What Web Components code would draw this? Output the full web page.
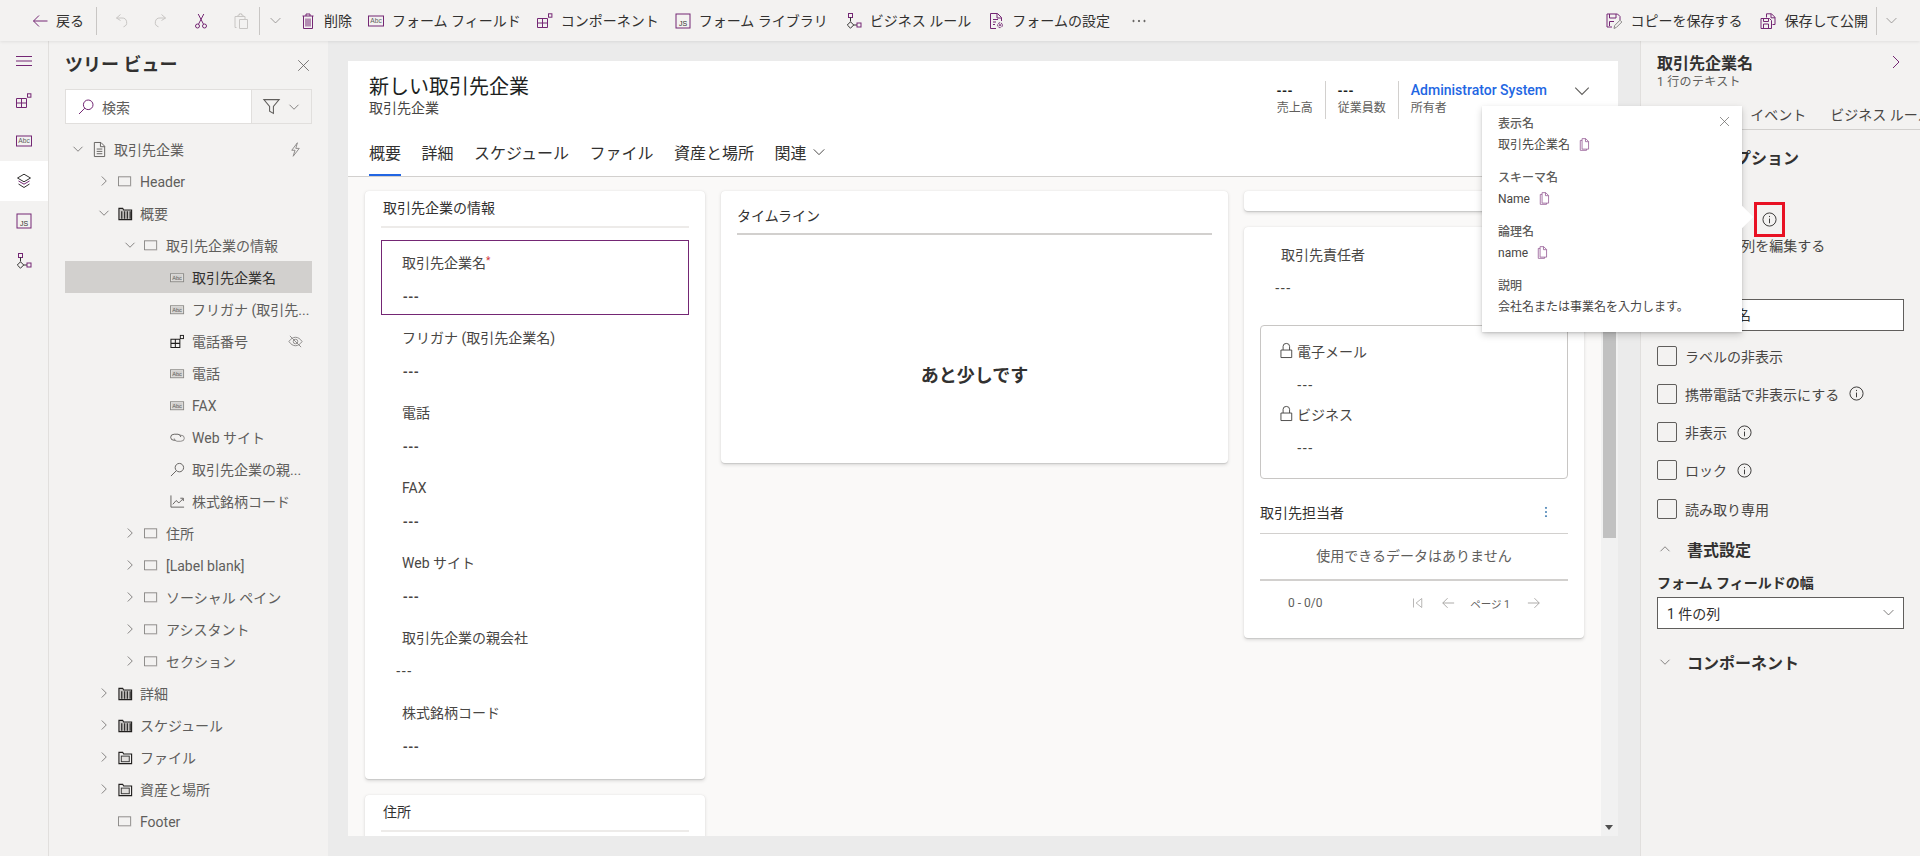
<!DOCTYPE html>
<html lang="ja">
<head>
<meta charset="utf-8">
<title>フォーム デザイナー</title>
<style>
  html, body { margin: 0; height: 100%; overflow: hidden; }
  body { font-family: Roboto, "Noto Sans CJK JP", sans-serif; font-size: 14px; color: #323130; background: #f3f2f1; }
</style>
</head>
<body>
<app-toolbar>
  <tb-btn icon="back" style="margin-left:0">戻る</tb-btn>
  <tb-sep style="margin:0 16px 0 12px"></tb-sep>
  <tb-btn icon="undo" off></tb-btn>
  <tb-btn icon="redo" off style="margin-left:24px"></tb-btn>
  <tb-btn icon="cut" style="margin-left:24px"></tb-btn>
  <tb-btn icon="paste" off style="margin-left:24px"></tb-btn>
  <tb-sep style="margin:0 9px 0 10px"></tb-sep>
  <tb-btn icon="down" off style="margin-left:0;color:#8a8886"></tb-btn>
  <tb-btn icon="trash" style="margin-left:18px">削除</tb-btn>
  <tb-btn icon="abc" style="margin-left:16px">フォーム フィールド</tb-btn>
  <tb-btn icon="comp" style="margin-left:16px">コンポーネント</tb-btn>
  <tb-btn icon="js" style="margin-left:16px">フォーム ライブラリ</tb-btn>
  <tb-btn icon="flow" style="margin-left:18px">ビジネス ルール</tb-btn>
  <tb-btn icon="gear" style="margin-left:17px">フォームの設定</tb-btn>
  <tb-btn icon="more" off style="margin-left:21px;color:#605e5c"></tb-btn>
  <tb-btn slot="right" icon="saveas">コピーを保存する</tb-btn>
  <tb-btn slot="right" icon="publish" style="margin-left:18px">保存して公開</tb-btn>
  <tb-sep slot="right" style="margin:0 8px"></tb-sep>
  <tb-btn slot="right" icon="down" off style="margin:0 22px 0 0;color:#8a8886"></tb-btn>
</app-toolbar>

<app-body>
  <left-rail></left-rail>

  <tree-view heading="ツリー ビュー">
    <tree-row level="0" chevron="open" icon="doc" bolt>取引先企業</tree-row>
    <tree-row level="1" chevron="closed" icon="section">Header</tree-row>
    <tree-row level="1" chevron="open" icon="tab">概要</tree-row>
    <tree-row level="2" chevron="open" icon="section">取引先企業の情報</tree-row>
    <tree-row level="3" icon="abcgray" selected>取引先企業名</tree-row>
    <tree-row level="3" icon="abcgray">フリガナ (取引先...</tree-row>
    <tree-row level="3" icon="compdark" hidden-mark>電話番号</tree-row>
    <tree-row level="3" icon="abcgray">電話</tree-row>
    <tree-row level="3" icon="abcgray">FAX</tree-row>
    <tree-row level="3" icon="link">Web サイト</tree-row>
    <tree-row level="3" icon="lookup">取引先企業の親...</tree-row>
    <tree-row level="3" icon="chart">株式銘柄コード</tree-row>
    <tree-row level="2" chevron="closed" icon="section">住所</tree-row>
    <tree-row level="2" chevron="closed" icon="section">[Label blank]</tree-row>
    <tree-row level="2" chevron="closed" icon="section">ソーシャル ペイン</tree-row>
    <tree-row level="2" chevron="closed" icon="section">アシスタント</tree-row>
    <tree-row level="2" chevron="closed" icon="section">セクション</tree-row>
    <tree-row level="1" chevron="closed" icon="tab">詳細</tree-row>
    <tree-row level="1" chevron="closed" icon="tab">スケジュール</tree-row>
    <tree-row level="1" chevron="closed" icon="tab2">ファイル</tree-row>
    <tree-row level="1" chevron="closed" icon="tab2">資産と場所</tree-row>
    <tree-row level="1" icon="section">Footer</tree-row>
  </tree-view>

  <form-canvas>
    <form-header title-text="新しい取引先企業" sub="取引先企業"></form-header>
    <form-card heading="取引先企業の情報">
      <form-field label="取引先企業名" required boxed></form-field>
      <form-field label="フリガナ (取引先企業名)"></form-field>
      <form-field label="電話"></form-field>
      <form-field label="FAX"></form-field>
      <form-field label="Web サイト"></form-field>
      <form-field label="取引先企業の親会社" shifted></form-field>
      <form-field label="株式銘柄コード"></form-field>
    </form-card>
    <timeline-card slot="middle"></timeline-card>
    <blank-card slot="right"></blank-card>
    <contact-card slot="right"></contact-card>
    <form-card slot="below" heading="住所"></form-card>
  </form-canvas>

  <prop-panel></prop-panel>
  <info-popup></info-popup>
</app-body>

<script>
const icons = {
  back: '<path d="M15.5 8H1.5M7 2.5 1.5 8 7 13.5"/>',
  undo: '<path d="M7.5 1.5 3.5 5l4 2.5M3.5 5H9a4.5 4.5 0 0 1 1.5 8.8"/>',
  redo: '<path d="M8.5 1.5 12.5 5l-4 2.5M12.5 5H7a4.5 4.5 0 0 0-1.5 8.8"/>',
  cut: '<circle cx="4.5" cy="13" r="2"/><circle cx="11.5" cy="13" r="2"/><path d="M5.5 11.2 10.8 1M10.5 11.2 5.2 1"/>',
  paste: '<path d="M3.5 14.5H2V3.5h10V6M5 3.5V2h1.5V.8h2V2H10v1.5"/><path d="M6.5 6.5h8v9h-8z"/>',
  down: '<path d="M2 5l6 6 6-6"/>',
  up: '<path d="M2 11l6-6 6 6"/>',
  right: '<path d="M5 2l6 6-6 6"/>',
  trash: '<path d="M2.5 3h11M6 3V1h4v2M3.5 3v12.5h9V3M6 5.5v8M8 5.5v8M10 5.5v8"/>',
  abc: '<rect x=".5" y="3" width="15" height="10"/><text x="8" y="10.3" font-size="6.6" text-anchor="middle" fill="#605e5c" stroke="none" font-family="Liberation Sans">Abc</text>',
  abcgray: '<rect x=".5" y="4" width="14" height="8.5" stroke="#8a8886" fill="#f3f2f1"/><rect x="1.5" y="5" width="12" height="6.5" fill="#d2d0ce" stroke="none"/><text x="7.5" y="10.4" font-size="6" text-anchor="middle" fill="#605e5c" stroke="none" font-family="Liberation Sans">Abc</text>',
  comp: '<path d="M.5 5.5h10v9H.5zM5.5 5.5v9M.5 10h10"/><rect x="11.5" y=".8" width="3.4" height="3.4"/>',
  compdark: '<path d="M1 5.5h9.5v9H1zM5.7 5.5v9M1 10h9.5" stroke="#201f1e" stroke-width="1.1"/><rect x="11" y="1.5" width="3.4" height="3.4" stroke="#201f1e"/>',
  js: '<rect x="1" y="1" width="14" height="14"/><text x="8" y="12.6" font-size="7" text-anchor="middle" fill="#323130" stroke="none" font-family="Liberation Sans">JS</text>',
  flow: '<rect x="2.5" y=".5" width="4" height="4" stroke="#742774"/><path d="M4.5 4.5v4M7.5 12H11" stroke="#323130"/><path d="M4.5 8.8 7.7 12l-3.2 3.2L1.3 12z" stroke="#323130"/><rect x="11" y="10" width="4" height="4" stroke="#742774"/>',
  gear: '<path d="M8 15.5H2.5V.5h7l4 4V8M9 .5V5h4.5M5 6.5h5M5 9h3M5 11.5h2"/><circle cx="12" cy="12.2" r="2.4" stroke-dasharray="2 .8"/><circle cx="12" cy="12.2" r=".7"/>',
  more: '<circle cx="2.5" cy="8" r=".7" fill="currentColor"/><circle cx="8" cy="8" r=".7" fill="currentColor"/><circle cx="13.5" cy="8" r=".7" fill="currentColor"/>',
  saveas: '<path d="M6 14H1V1h10.5L14 3.5V7M3.5 1v4h6.5V1M3.5 13V8.5H8"/><path d="M8 15.5l.7-3L14 7.2l1.8 1.8-5.3 5.3z" stroke="#8a8886"/>',
  publish: '<path d="M6.5 4.5V.8h5l3.5 3.5v7.2h-2.5M11 .8v4h4"/><path d="M1 5.5h8.5l2 2v8H1zM3.5 5.5v3h5v-3M3.5 15.5v-4.5h5v4.5"/>',
  hamburger: '<path d="M0 3.5h16M0 8h16M0 12.5h16"/>',
  layers: '<path d="M8 1.2 14.5 5 8 8.8 1.5 5z" stroke="#323130"/><path d="M2.5 8 8 11.2 13.5 8" stroke="#742774"/><path d="M2.5 11 8 14.5l5.5-3.5" stroke="#323130"/>',
  search: '<circle cx="10.2" cy="5.8" r="4.8"/><path d="M6.8 9.2 1 15"/>',
  filter: '<path d="M.8 1.5h14.4L9.8 8v6.5l-3.6-2V8z"/>',
  close: '<path d="M1.5 1.5l13 13M14.5 1.5l-13 13"/>',
  doc: '<path d="M2.5.5h7l4 4v11h-11zM9 .5V5h4.5M5 7.5h6M5 10h6M5 12.5h6"/>',
  bolt: '<path d="M10 .8 4 8.8h3.5L5.5 15.2 12 6.8H8.3z"/>',
  section: '<rect x=".5" y="3" width="13" height="9.5" stroke="#8a8886"/><path d="M1 13h13" stroke="#d2d0ce"/>',
  tab: '<path d="M1 2.5h4l1 1.8h8.5v10.2H1z" fill="#c8c6c4" stroke="#201f1e" stroke-width="1.2"/><path d="M4 5.5v8M7 5.5v8M10 5.5v8M13 5.5v8" stroke="#323130" stroke-width="1.4"/>',
  tab2: '<path d="M1 2.5h4l1 1.8h8.5v10.2H1z" stroke="#201f1e" stroke-width="1.2"/><rect x="3.5" y="6.5" width="8.5" height="6" stroke="#323130" fill="#e1dfdd"/>',
  link: '<path d="M6 11H4.5a3.5 3 0 0 1 0-6.5h4a3.5 3 0 0 1 3 3" stroke="#605e5c"/><path d="M10 5.5h1.5a3.5 3 0 0 1 0 6.5h-4a3.5 3 0 0 1-3-3" stroke="#8a8886"/>',
  lookup: '<circle cx="10" cy="6" r="4.5"/><path d="M6.8 9.2 1 15"/>',
  chart: '<path d="M1 1.5V14h14M3 11l3.5-4 3 2.5L14 5M11 4.5h3.2v3"/>',
  eyeoff: '<path d="M1 8c2-3 4.5-4.5 7-4.5S13 5 15 8c-2 3-4.5 4.5-7 4.5S3 11 1 8z"/><circle cx="8" cy="8" r="2.4"/><path d="M2 2l12 12"/>',
  lock: '<path d="M1 7.5h11.5v8H1zM3.3 7.5V3.5a3.4 3 0 0 1 6.9 0v4"/>',
  info: '<circle cx="8" cy="8" r="7"/><path d="M8 7v5M8 4.2v1.2"/>',
  copy: '<path d="M5 .8h4.5L13 4.3v9.4H5zM9.2 .8v3.7H13M5 3H2.8v12.2H10.5v-1.5"/>',
  first: '<path d="M2 2v12M13 2 5.5 8l7.5 6z"/>',
  prev: '<path d="M15 8H2M7.5 2.5 2 8l5.5 5.5"/>',
  next: '<path d="M1 8h13M8.5 2.5 14 8l-5.5 5.5"/>',
  vdots: '<circle cx="8" cy="2.5" r=".8" fill="currentColor"/><circle cx="8" cy="8" r=".8" fill="currentColor"/><circle cx="8" cy="13.5" r=".8" fill="currentColor"/>'
}

class Component extends HTMLElement {
  constructor(template) {
    super()
    const _template = document.createElement('template')
    _template.innerHTML = template
    this.attachShadow({ mode: 'open' })
    this.shadowRoot.appendChild(_template.content.cloneNode(true))
  }
}

class UiIcon extends HTMLElement {
  constructor() {
    super()
    this.attachShadow({ mode: 'open' })
  }
  static get observedAttributes() {
    return ['name', 'size']
  }
  attributeChangedCallback() {
    this.render()
  }
  connectedCallback() {
    this.render()
  }
  render() {
    const size = this.getAttribute('size') || 16
    this.shadowRoot.innerHTML = `
      <style>
      :host { display: inline-flex; flex: none; width: ${size}px; height: ${size}px; }
      svg { width: 100%; height: 100%; fill: none; stroke: currentColor; stroke-width: 1; display: block; overflow: visible; }
      </style>
      <svg viewBox="0 0 16 16">${icons[this.getAttribute('name')] || ''}</svg>`
  }
}

class AppToolbar extends Component {
  constructor() {
    super(`
      <style>
      :host { display: flex; align-items: center; height: 41px; padding-left: 32px; box-sizing: border-box; background: #f3f2f1; position: relative; z-index: 2; box-shadow: 0 1px 3px rgba(0,0,0,.08); }
      .right { display: flex; align-items: center; margin-left: auto; }
      </style>
      <slot></slot>
      <div class="right"><slot name="right"></slot></div>
    `)
  }
}

class TbBtn extends Component {
  constructor() {
    super(`
      <style>
      :host { display: inline-flex; align-items: center; gap: 8px; height: 28px; color: #742774; white-space: nowrap; }
      :host([off]) { color: #c8c6c4; }
      span { color: #323130; font-size: 14px; line-height: 20px; }
      </style>
      <ui-icon></ui-icon><span><slot></slot></span>
    `)
  }
  connectedCallback() {
    const icon = this.shadowRoot.querySelector('ui-icon')
    icon.setAttribute('name', this.getAttribute('icon'))
    if (this.getAttribute('icon') === 'down') icon.setAttribute('size', 13)
    if (!this.textContent.trim()) this.shadowRoot.querySelector('span').style.display = 'none'
  }
}

class TbSep extends Component {
  constructor() {
    super(`<style>:host { display: block; width: 1px; height: 28px; background: #c8c6c4; }</style>`)
  }
}

class AppBody extends Component {
  constructor() {
    super(`
      <style>
      :host { display: grid; grid-template-columns: 49px 279px 1312px 280px; height: 815px; position: relative; overflow: hidden; }
      </style>
      <slot></slot>
    `)
  }
}

class LeftRail extends Component {
  constructor() {
    super(`
      <style>
      :host { display: flex; flex-direction: column; border-right: 1px solid #e1dfdd; background: #f3f2f1; box-sizing: border-box; }
      .item { height: 40px; display: flex; align-items: center; justify-content: center; color: #742774; }
      .item:first-child { color: #323130; }
      .on { background: #fff; }
      </style>
      <div class="item"><ui-icon name="hamburger"></ui-icon></div>
      <div class="item"><ui-icon name="comp"></ui-icon></div>
      <div class="item"><ui-icon name="abc"></ui-icon></div>
      <div class="item on"><ui-icon name="layers"></ui-icon></div>
      <div class="item"><ui-icon name="js"></ui-icon></div>
      <div class="item"><ui-icon name="flow"></ui-icon></div>
    `)
  }
}

class TreeView extends Component {
  constructor() {
    super(`
      <style>
      :host { display: flex; flex-direction: column; padding: 0 16px; background: #f3f2f1; box-sizing: border-box; }
      .head { display: flex; align-items: center; justify-content: space-between; height: 48px; }
      h2 { margin: 0; font-size: 18px; font-weight: 600; line-height: 24px; color: #323130; }
      .head ui-icon { color: #605e5c; margin-right: 2px; }
      .search { display: flex; height: 35px; border: 1px solid #e1dfdd; box-sizing: border-box; }
      .input { flex: none; width: 185px; background: #fff; display: flex; align-items: center; gap: 8px; padding-left: 12px; box-sizing: border-box; color: #605e5c; }
      .input ui-icon { color: #742774; }
      .filter { flex: 1; display: flex; align-items: center; gap: 8px; padding-left: 11px; border-left: 1px solid #e1dfdd; color: #605e5c; }
      .rows { margin-top: 9px; }
      </style>
      <div class="head"><h2></h2><ui-icon name="close" size="13"></ui-icon></div>
      <div class="search">
        <div class="input"><ui-icon name="search"></ui-icon><span>検索</span></div>
        <div class="filter"><ui-icon name="filter" size="17"></ui-icon><ui-icon name="down" size="12"></ui-icon></div>
      </div>
      <div class="rows"><slot></slot></div>
    `)
  }
  connectedCallback() {
    this.shadowRoot.querySelector('h2').textContent = this.getAttribute('heading')
  }
}

class TreeRow extends Component {
  constructor() {
    super(`
      <style>
      :host { display: flex; align-items: center; height: 32px; color: #605e5c; white-space: nowrap; }
      :host([selected]) { background: #d2d0ce; color: #323130; }
      .chev { flex: none; width: 20px; display: flex; align-items: center; color: #605e5c; }
      .icon { color: #605e5c; margin-right: 7px; }
      span { flex: 1; line-height: 20px; padding-top: 2px; }
      .tail { margin-right: 9px; color: #8a8886; }
      </style>
      <div class="chev"></div>
      <ui-icon class="icon" size="15"></ui-icon>
      <span><slot></slot></span>
    `)
  }
  connectedCallback() {
    const level = +this.getAttribute('level')
    this.style.paddingLeft = [7, 33, 59, 85][level] + 'px'
    const root = this.shadowRoot
    root.querySelector('.icon').setAttribute('name', this.getAttribute('icon'))
    const chevron = this.getAttribute('chevron')
    if (chevron) {
      const c = document.createElement('ui-icon')
      c.setAttribute('name', chevron === 'open' ? 'down' : 'right')
      c.setAttribute('size', 12)
      root.querySelector('.chev').appendChild(c)
    }
    const tailName = this.hasAttribute('bolt') ? 'bolt' : this.hasAttribute('hidden-mark') ? 'eyeoff' : null
    if (tailName) {
      const t = document.createElement('ui-icon')
      t.className = 'tail'
      t.setAttribute('name', tailName)
      t.setAttribute('size', 15)
      root.appendChild(t)
    }
  }
}

class FormCanvas extends Component {
  constructor() {
    super(`
      <style>
      :host { display: block; padding: 20px 22px 20px 20px; background: #ebebeb; box-sizing: border-box; height: 815px; }
      .form { height: 775px; display: flex; flex-direction: column; background: #fff; overflow: hidden; }
      .body { flex: 1; min-height: 0; position: relative; background: #faf9f8; display: flex; overflow: hidden; }
      .cols { flex: 1; display: grid; grid-template-columns: 340px 507px 340px; gap: 16px; padding: 14px 0 0 17px; align-items: start; align-content: start; }
      .stack { display: flex; flex-direction: column; gap: 16px; }
      .bar { flex: none; width: 17px; background: #f1f1f1; position: relative; }
      .thumb { position: absolute; left: 2px; right: 2px; top: 13px; height: 348px; background: #c1c1c1; }
      .arrow { position: absolute; left: 4px; bottom: 6px; width: 0; height: 0; border: 4.5px solid transparent; border-top: 5px solid #505050; border-bottom: 0; }
      </style>
      <div class="form">
        <slot name="head"></slot>
        <div class="body">
          <div class="cols">
            <div class="stack"><slot></slot><slot name="below"></slot></div>
            <div class="stack"><slot name="middle"></slot></div>
            <div class="stack"><slot name="right"></slot></div>
          </div>
          <div class="bar"><div class="thumb"></div><div class="arrow"></div></div>
        </div>
      </div>
    `)
  }
  connectedCallback() {
    this.querySelector('form-header').setAttribute('slot', 'head')
  }
}

class FormHeader extends Component {
  constructor() {
    super(`
      <style>
      :host { display: block; height: 116px; box-sizing: border-box; border-bottom: 1px solid #d2d0ce; background: #fff; }
      .top { display: flex; height: 67px; padding-left: 21px; box-sizing: border-box; }
      .name { padding-top: 12px; }
      h1 { margin: 0; font-size: 20px; font-weight: 400; line-height: 28px; color: #201f1e; }
      .sub { line-height: 14px; color: #484644; }
      .stats { margin-left: auto; display: flex; padding-top: 20px; height: 38px; }
      .stat { padding: 0 12px; border-right: 1px solid #d2d0ce; }
      .stat:last-of-type { border-right: 0; padding-right: 0; }
      .v { line-height: 18px; font-family: "Noto Sans", sans-serif; letter-spacing: 1px; font-weight: 600; color: #201f1e; }
      .v.owner { font-family: Roboto, sans-serif; letter-spacing: 0; font-weight: 500; color: #2266e3; }
      .k { font-size: 12px; line-height: 18px; color: #605e5c; }
      .more { margin: 1px 27px 0 26px; color: #605e5c; }
      .tabs { display: flex; gap: 20.5px; height: 48px; padding-left: 21px; align-items: stretch; }
      .tab { position: relative; display: flex; align-items: center; gap: 6px; font-size: 16px; color: #323130; }
      .tab.on::after { content: ""; position: absolute; left: 0; right: 0; bottom: 0; height: 2px; background: #2266e3; }
      </style>
      <div class="top">
        <div class="name"><h1></h1><div class="sub"></div></div>
        <div class="stats">
          <div class="stat"><div class="v">---</div><div class="k">売上高</div></div>
          <div class="stat"><div class="v">---</div><div class="k">従業員数</div></div>
          <div class="stat"><div class="v owner">Administrator System</div><div class="k">所有者</div></div>
          <ui-icon class="more" name="down" size="18"></ui-icon>
        </div>
      </div>
      <div class="tabs">
        <div class="tab on">概要</div>
        <div class="tab">詳細</div>
        <div class="tab">スケジュール</div>
        <div class="tab">ファイル</div>
        <div class="tab">資産と場所</div>
        <div class="tab">関連<ui-icon name="down" size="14"></ui-icon></div>
      </div>
    `)
  }
  connectedCallback() {
    this.shadowRoot.querySelector('h1').textContent = this.getAttribute('title-text')
    this.shadowRoot.querySelector('.sub').textContent = this.getAttribute('sub')
  }
}

const cardStyle = `:host { display: block; background: #fff; border-radius: 4px; box-shadow: 0 1.6px 3.6px rgba(0,0,0,.13), 0 .3px .9px rgba(0,0,0,.1); box-sizing: border-box; }`

class FormCard extends Component {
  constructor() {
    super(`
      <style>
      ${cardStyle}
      :host { padding: 0 16px 14px; }
      .head { height: 37px; box-sizing: border-box; padding: 7px 0 0 2px; line-height: 20px; border-bottom: 2px solid #edebe9; color: #323130; margin-bottom: 12px; }
      </style>
      <div class="head"></div>
      <slot></slot>
    `)
  }
  connectedCallback() {
    this.shadowRoot.querySelector('.head').textContent = this.getAttribute('heading')
  }
}

class FormField extends Component {
  constructor() {
    super(`
      <style>
      :host { display: block; height: 75px; box-sizing: border-box; padding: 13px 0 0 21px; color: #484644; }
      :host([boxed]) { border: 1px solid #742774; padding: 10px 0 0 20px; }
      .l { line-height: 20px; }
      .l b { color: #d13438; font-weight: 400; font-size: 10px; vertical-align: 4px; }
      .v { font-family: "Noto Sans", sans-serif; letter-spacing: 1px; font-weight: 600; line-height: 20px; margin-top: 13px; padding-left: 1px; color: #484644; }
      :host([shifted]) .v { margin-left: -7px; font-weight: 400; }
      </style>
      <div class="l"></div>
      <div class="v">---</div>
    `)
  }
  connectedCallback() {
    const l = this.shadowRoot.querySelector('.l')
    l.textContent = this.getAttribute('label')
    if (this.hasAttribute('required')) l.insertAdjacentHTML('beforeend', '<b>*</b>')
  }
}

class TimelineCard extends Component {
  constructor() {
    super(`
      <style>
      ${cardStyle}
      :host { height: 272px; padding: 0 16px; }
      .head { height: 44px; box-sizing: border-box; padding-top: 15px; line-height: 20px; border-bottom: 2px solid #d2d0ce; color: #323130; }
      .msg { text-align: center; font-size: 18px; font-weight: 600; line-height: 24px; margin-top: 129px; color: #323130; }
      </style>
      <div class="head">タイムライン</div>
      <div class="msg">あと少しです</div>
    `)
  }
}

class BlankCard extends Component {
  constructor() {
    super(`<style>${cardStyle} :host { height: 20px; }</style>`)
  }
}

class ContactCard extends Component {
  constructor() {
    super(`
      <style>
      ${cardStyle}
      :host { height: 411px; padding: 5px 16px 0; }
      .box { margin-top: 18px; height: 154px; box-sizing: border-box; border: 1px solid #c8c6c4; border-radius: 4px; padding: 16px 0 0 19px; color: #484644; }
      .f { height: 63px; }
      .l { display: flex; align-items: center; gap: 2px; line-height: 20px; }
      .l ui-icon { margin-top: -3px; }
      .v { font-family: "Noto Sans", sans-serif; letter-spacing: 1px; padding-left: 17px; margin-top: 13px; line-height: 20px; }
      .grid-head { display: flex; justify-content: space-between; align-items: center; margin-top: 23px; height: 20px; padding-right: 16px; color: #323130; }
      .grid-head ui-icon { color: #2b6ea8; }
      .rule { height: 1px; background: #d2d0ce; margin-top: 11px; }
      .empty { text-align: center; height: 45px; line-height: 45px; color: #605e5c; border-bottom: 2px solid #d2d0ce; }
      .pager { display: flex; align-items: center; height: 44px; padding: 0 27px 0 28px; font-size: 12px; color: #605e5c; }
      .nav { margin-left: auto; display: flex; align-items: center; color: #a19f9d; }
      .nav span { margin: 0 17px 0 15px; color: #605e5c; font-size: 10.5px; }
      .nav .p { margin-left: 17px; }
      </style>
      <form-field label="取引先責任者" shifted></form-field>
      <div class="box">
        <div class="f"><div class="l"><ui-icon name="lock" size="15"></ui-icon>電子メール</div><div class="v">---</div></div>
        <div class="f"><div class="l"><ui-icon name="lock" size="15"></ui-icon>ビジネス</div><div class="v">---</div></div>
      </div>
      <div class="grid-head">取引先担当者<ui-icon name="vdots" size="12"></ui-icon></div>
      <div class="rule"></div>
      <div class="empty">使用できるデータはありません</div>
      <div class="pager">0 - 0/0
        <div class="nav">
          <ui-icon name="first" size="12"></ui-icon>
          <ui-icon class="p" name="prev" size="14"></ui-icon>
          <span>ページ 1</span>
          <ui-icon name="next" size="14"></ui-icon>
        </div>
      </div>
    `)
  }
}

class PropPanel extends Component {
  constructor() {
    super(`
      <style>
      :host { display: block; border-left: 1px solid #e1dfdd; background: #f3f2f1; padding-left: 16px; box-sizing: border-box; overflow: hidden; position: relative; color: #323130; }
      .title { display: flex; justify-content: space-between; align-items: center; height: 22px; margin-top: 10px; padding-right: 16px; font-size: 16px; font-weight: 600; }
      .title ui-icon { color: #742774; }
      .sub { font-size: 12px; line-height: 15px; margin-top: 2px; color: #605e5c; letter-spacing: .3px; }
      .tabs { display: flex; gap: 24px; margin: 10px 0 0 -16px; padding-left: 16px; height: 30px; border-bottom: 1px solid #d2d0ce; box-sizing: border-box; line-height: 30px; white-space: nowrap; color: #484644; }
      .sec { display: flex; align-items: center; gap: 16px; height: 24px; font-size: 16px; font-weight: 600; }
      .sec ui-icon { color: #605e5c; margin-left: 2px; }
      .name { display: flex; align-items: center; height: 34px; margin-top: 33px; color: #484644; }
      .name .text { width: 97px; }
      .mark { display: flex; align-items: center; justify-content: center; width: 31px; height: 35px; box-sizing: border-box; border: 3px solid #e81123; color: #323130; }
      .edit { padding-left: 29px; line-height: 20px; color: #484644; }
      .lab { line-height: 20px; margin-top: 15px; }
      .input { width: 247px; height: 32px; box-sizing: border-box; border: 1px solid #605e5c; background: #fff; padding-left: 9px; line-height: 30px; margin-top: 8px; }
      .checks { margin-top: 14.5px; }
      .check { display: flex; align-items: center; gap: 8px; height: 20px; margin-bottom: 18.3px; color: #484644; }
      .box { flex: none; width: 20px; height: 20px; box-sizing: border-box; border: 1px solid #605e5c; border-radius: 2px; }
      .check ui-icon { margin-left: 2px; color: #323130; }
      .field-label { font-weight: 600; line-height: 20px; margin-top: 12px; }
      .select { display: flex; align-items: center; justify-content: space-between; width: 247px; height: 32px; box-sizing: border-box; border: 1px solid #605e5c; background: #fff; padding: 0 8px 0 9px; margin-top: 4px; }
      .select ui-icon { color: #605e5c; }
      </style>
      <div class="title">取引先企業名<ui-icon name="right" size="16"></ui-icon></div>
      <div class="sub">1 行のテキスト</div>
      <div class="tabs"><span>プロパティ</span><span>イベント</span><span>ビジネス ルール</span></div>
      <div class="sec" style="margin-top:15px"><ui-icon name="up" size="12"></ui-icon>表示オプション</div>
      <div class="name"><span class="text">この列の表示名</span><div class="mark"><ui-icon name="info" size="15"></ui-icon></div></div>
      <div class="edit">テーブル列を編集する</div>
      <div class="lab">表示ラベル</div>
      <div class="input">取引先企業名</div>
      <div class="checks">
        <div class="check"><div class="box"></div>ラベルの非表示</div>
        <div class="check"><div class="box"></div>携帯電話で非表示にする<ui-icon name="info" size="15"></ui-icon></div>
        <div class="check"><div class="box"></div>非表示<ui-icon name="info" size="15"></ui-icon></div>
        <div class="check"><div class="box"></div>ロック<ui-icon name="info" size="15"></ui-icon></div>
        <div class="check"><div class="box"></div>読み取り専用</div>
      </div>
      <div class="sec" style="margin-top:1px"><ui-icon name="up" size="12"></ui-icon>書式設定</div>
      <div class="field-label">フォーム フィールドの幅</div>
      <div class="select">1 件の列<ui-icon name="down" size="13"></ui-icon></div>
      <div class="sec" style="margin-top:21px"><ui-icon name="down" size="12"></ui-icon>コンポーネント</div>
    `)
  }
}

class InfoPopup extends Component {
  constructor() {
    super(`
      <style>
      :host { position: absolute; left: 1482px; top: 65px; width: 260px; height: 226px; box-sizing: border-box; background: #fff; padding: 8.5px 16px; font-size: 12px; color: #484644; box-shadow: 0 3.2px 7.2px rgba(0,0,0,.18), 0 .6px 1.8px rgba(0,0,0,.12); z-index: 3; }
      :host::after { content: ""; position: absolute; right: -8px; top: 103px; width: 16px; height: 16px; background: #fff; transform: rotate(45deg); }
      .x { position: absolute; right: 12px; top: 10px; color: #605e5c; }
      .l { font-weight: 500; line-height: 18px; color: #605e5c; }
      .v { display: flex; align-items: center; gap: 8px; line-height: 18px; margin: 3px 0 15px; }
      .v ui-icon { color: #742774; opacity: .75; }
      .d { margin-bottom: 0; }
      </style>
      <ui-icon class="x" name="close" size="11"></ui-icon>
      <div class="l">表示名</div>
      <div class="v">取引先企業名<ui-icon name="copy" size="13"></ui-icon></div>
      <div class="l">スキーマ名</div>
      <div class="v">Name<ui-icon name="copy" size="13"></ui-icon></div>
      <div class="l">論理名</div>
      <div class="v">name<ui-icon name="copy" size="13"></ui-icon></div>
      <div class="l">説明</div>
      <div class="v d">会社名または事業名を入力します。</div>
    `)
  }
}

window.customElements.define('ui-icon', UiIcon)
window.customElements.define('app-toolbar', AppToolbar)
window.customElements.define('tb-btn', TbBtn)
window.customElements.define('tb-sep', TbSep)
window.customElements.define('app-body', AppBody)
window.customElements.define('left-rail', LeftRail)
window.customElements.define('tree-view', TreeView)
window.customElements.define('tree-row', TreeRow)
window.customElements.define('form-canvas', FormCanvas)
window.customElements.define('form-header', FormHeader)
window.customElements.define('form-card', FormCard)
window.customElements.define('form-field', FormField)
window.customElements.define('timeline-card', TimelineCard)
window.customElements.define('blank-card', BlankCard)
window.customElements.define('contact-card', ContactCard)
window.customElements.define('prop-panel', PropPanel)
window.customElements.define('info-popup', InfoPopup)
</script>
</body>
</html>
